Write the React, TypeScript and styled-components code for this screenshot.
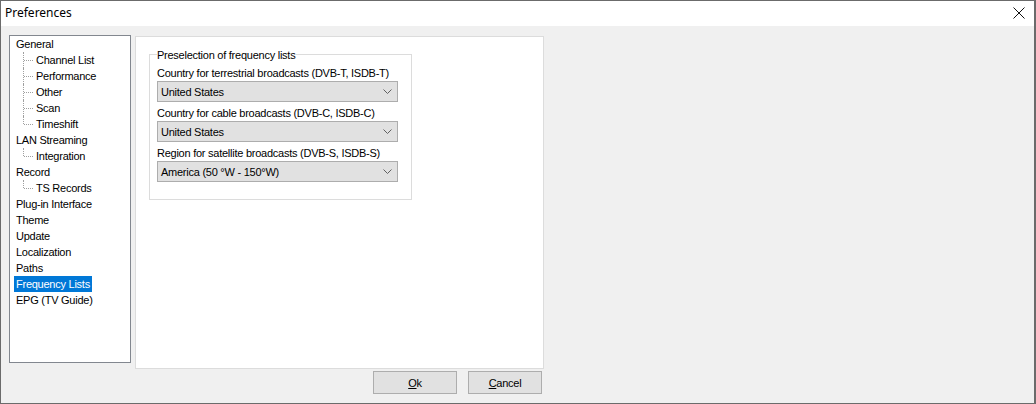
import React from 'react';
import styled, { createGlobalStyle, css } from 'styled-components';

const GlobalStyle = createGlobalStyle`
    html, body {
        margin: 0;
        padding: 0;
        background: #f0f0f0;
    }
    * {
        box-sizing: border-box;
    }
`;

interface TreeNode {
    label: string;
    children?: string[];
}

const tree: TreeNode[] = [
    { label: 'General', children: ['Channel List', 'Performance', 'Other', 'Scan', 'Timeshift'] },
    { label: 'LAN Streaming', children: ['Integration'] },
    { label: 'Record', children: ['TS Records'] },
    { label: 'Plug-in Interface' },
    { label: 'Theme' },
    { label: 'Update' },
    { label: 'Localization' },
    { label: 'Paths' },
    { label: 'Frequency Lists' },
    { label: 'EPG (TV Guide)' },
];

const selected = 'Frequency Lists';

const combos = [
    { label: 'Country for terrestrial broadcasts (DVB-T, ISDB-T)', value: 'United States' },
    { label: 'Country for cable broadcasts (DVB-C, ISDB-C)', value: 'United States' },
    { label: 'Region for satellite broadcasts (DVB-S, ISDB-S)', value: 'America (50 °W - 150°W)' },
];

const Chevron = () => (
    <svg width="9" height="5" viewBox="0 0 9 5">
        <path d="M0.5 0.5 L4.5 4.5 L8.5 0.5" fill="none" stroke="#606060" strokeWidth="1" />
    </svg>
);

const CloseIcon = () => (
    <svg width="12" height="12" viewBox="0 0 12 12">
        <path d="M0.5 0.5 L11.5 11.5 M11.5 0.5 L0.5 11.5" stroke="#111" strokeWidth="1" />
    </svg>
);

const App: React.FC = () => {
    return (
        <>
            <GlobalStyle />
            <Window>
                <TitleBar>
                    <Title>Preferences</Title>
                    <CloseButton>
                        <CloseIcon />
                    </CloseButton>
                </TitleBar>
                <Body>
                    <Tree>
                        {tree.map(node => (
                            <React.Fragment key={node.label}>
                                <Row>
                                    <Indent $level={0} />
                                    <ItemLabel $selected={node.label === selected}>{node.label}</ItemLabel>
                                </Row>
                                {node.children?.map((child, i) => (
                                    <Row key={child}>
                                        <Indent $level={1} $last={i === node.children!.length - 1} />
                                        <ItemLabel $selected={child === selected}>{child}</ItemLabel>
                                    </Row>
                                ))}
                            </React.Fragment>
                        ))}
                    </Tree>
                    <RightColumn>
                        <Panel>
                            <GroupBox>
                                <Legend>Preselection of frequency lists</Legend>
                                {combos.map(c => (
                                    <Field key={c.label}>
                                        <FieldLabel>{c.label}</FieldLabel>
                                        <Combo>
                                            <span>{c.value}</span>
                                            <Chevron />
                                        </Combo>
                                    </Field>
                                ))}
                            </GroupBox>
                        </Panel>
                        <ButtonRow>
                            <Button $width={84}><u>O</u>k</Button>
                            <Button $width={74}><u>C</u>ancel</Button>
                        </ButtonRow>
                    </RightColumn>
                </Body>
            </Window>
        </>
    );
};

const Window = styled.div`
    width: 1036px;
    height: 404px;
    border: 1px solid #6b6b6b;
    border-right-width: 2px;
    background: #f0f0f0;
    display: flex;
    flex-direction: column;
    font-family: "Liberation Sans", Arial, sans-serif;
    font-size: 11px;
    letter-spacing: -0.25px;
    color: #000;
`;

const TitleBar = styled.div`
    height: 25px;
    background: #fff;
    display: flex;
    align-items: center;
    justify-content: space-between;
    padding: 0 9px 0 4px;
`;

const Title = styled.div`
    font-family: "Noto Sans", "Liberation Sans", sans-serif;
    font-size: 12px;
    letter-spacing: 0;
    margin-top: -2px;
`;

const CloseButton = styled.div`
    display: flex;
    align-items: center;
    margin-top: -1px;
`;

const Body = styled.div`
    flex: 1;
    display: flex;
    padding: 9px 0 0 8px;
`;

const Tree = styled.div`
    width: 122px;
    height: 328px;
    border: 1px solid #82878f;
    background: #fff;
`;

const Row = styled.div`
    height: 16px;
    display: flex;
    align-items: center;
`;

const Indent = styled.span<{ $level: number; $last?: boolean }>`
    position: relative;
    align-self: stretch;
    flex: none;
    width: ${p => (p.$level === 0 ? 4 : 24)}px;
    ${p =>
        p.$level > 0 &&
        css`
            &::before {
                content: '';
                position: absolute;
                left: 13px;
                top: 0;
                height: ${p.$last ? 8 : 16}px;
                border-left: 1px dotted #a0a0a0;
            }
            &::after {
                content: '';
                position: absolute;
                left: 14px;
                top: 8px;
                width: 9px;
                border-top: 1px dotted #a0a0a0;
            }
        `}
`;

const ItemLabel = styled.span<{ $selected?: boolean }>`
    padding: 0 2px;
    line-height: 16px;
    white-space: nowrap;
    ${p =>
        p.$selected &&
        css`
            background: #0078d7;
            color: #fff;
        `}
`;

const RightColumn = styled.div`
    display: flex;
    flex-direction: column;
    margin-left: 4px;
    padding-top: 1px;
`;

const Panel = styled.div`
    width: 409px;
    height: 333px;
    background: #fff;
    border: 1px solid #dcdcdc;
    padding: 17px 0 0 13px;
`;

const GroupBox = styled.div`
    position: relative;
    width: 263px;
    height: 146px;
    border: 1px solid #dcdcdc;
    padding: 11px 0 0 7px;
    display: flex;
    flex-direction: column;
    gap: 4px;
`;

const Legend = styled.span`
    position: absolute;
    top: -8px;
    left: 7px;
    padding: 0 1px 0 0;
    background: #fff;
    line-height: 16px;
`;

const Field = styled.div`
    display: flex;
    flex-direction: column;
    gap: 1px;
`;

const FieldLabel = styled.div`
    line-height: 14px;
    white-space: nowrap;
`;

const Combo = styled.div`
    width: 241px;
    height: 21px;
    background: #e1e1e1;
    border: 1px solid #adadad;
    display: flex;
    align-items: center;
    justify-content: space-between;
    padding: 0 5px 0 3px;
`;

const ButtonRow = styled.div`
    display: flex;
    justify-content: flex-end;
    gap: 11px;
    padding-right: 2px;
    margin-top: 2px;
`;

const Button = styled.div<{ $width: number }>`
    width: ${p => p.$width}px;
    height: 23px;
    background: #e1e1e1;
    border: 1px solid #adadad;
    display: flex;
    align-items: center;
    justify-content: center;
`;

export default App;
